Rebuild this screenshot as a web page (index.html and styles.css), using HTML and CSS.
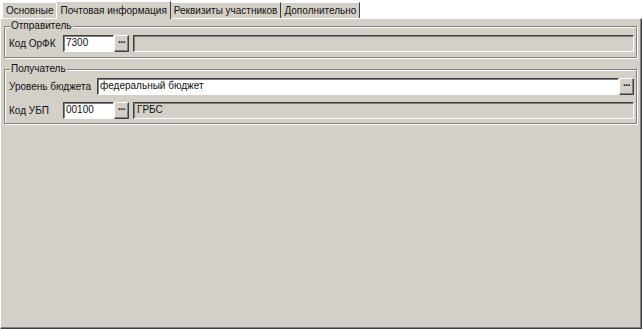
FILE: index.html
```html
<!DOCTYPE html>
<html>
	<head>
		<meta charset="UTF-8">
		<title>Почтовая информация</title>
		<link rel="stylesheet" href="styles.css">
	</head>
	<body>
		<div class="tabs">
			<div class="tab">Основные</div>
			<div class="tab active">Почтовая информация</div>
			<div class="tab">Реквизиты участников</div>
			<div class="tab">Дополнительно</div>
		</div>
		<div class="page">
			<div class="group">
				<div class="legend">Отправитель</div>
				<div class="row">
					<span class="lbl w1">Код ОрФК</span>
					<div class="edit short">7300</div>
					<div class="dots">···</div>
					<div class="field"></div>
				</div>
			</div>
			<div class="group g2">
				<div class="legend">Получатель</div>
				<div class="row">
					<span class="lbl w2">Уровень бюджета</span>
					<div class="edit long">федеральный бюджет</div>
					<div class="dots">···</div>
				</div>
				<div class="row r2">
					<span class="lbl w1">Код УБП</span>
					<div class="edit short">00100</div>
					<div class="dots">···</div>
					<div class="field">ГРБС</div>
				</div>
			</div>
		</div>
	</body>
</html>
```

FILE: styles.css
```css
*{
	margin: 0;
	padding: 0;
	box-sizing: border-box;
}
body{
	width: 642px;
	height: 329px;
	background: #fff;
	font: 10px "Liberation Sans", Arial, sans-serif;
	color: #111;
	overflow: hidden;
}
.tabs{
	display: flex;
	height: 18px;
	padding-left: 2px;
	background: #fff;
	align-items: flex-end;
}
.tab{
	height: 16px;
	line-height: 15px;
	padding: 0 3px;
	background: #d4d0c8;
	border-right: 1px solid #404040;
	border-top: 1px solid #fff;
}
.tab:first-child{border-right: none; border-left: 1px solid #fff;}
.tab.active{
	height: 18px;
	line-height: 17px;
	padding: 0 3px;
	border-left: 1px solid #fff;
	border-right: 1px solid #404040;
	margin-bottom: -1px;
	position: relative;
	z-index: 1;
}
.page{
	height: 311px;
	background: #d4d0c8;
	border-top: 1px solid #fff;
	border-left: 1px solid #fff;
	border-right: 1px solid #404040;
	border-bottom: 1px solid #404040;
	box-shadow: inset -1px -1px 0 #808080;
	padding: 7px 4px 0 3px;
}
.group{
	position: relative;
	height: 32px;
	border: 1px solid #808080;
	box-shadow: 1px 1px 0 #fff, inset 1px 1px 0 #fff;
	padding: 8px 2px 0 4px;
}
.g2{
	margin-top: 11px;
	height: 55px;
}
.legend{
	position: absolute;
	top: -7px;
	left: 5px;
	padding: 0 1px;
	background: #d4d0c8;
	line-height: 12px;
}
.row{
	display: flex;
	align-items: center;
	height: 17px;
}
.r2{margin-top: 7px;}
.lbl{white-space: nowrap;}
.w1{width: 54px;}
.w2{width: 88px;}
.edit{
	height: 17px;
	background: #fff;
	border-top: 1px solid #404040;
	border-left: 1px solid #404040;
	border-right: 1px solid #fff;
	border-bottom: 1px solid #fff;
	box-shadow: inset 1px 1px 0 #808080;
	padding: 0 2px;
	line-height: 14px;
}
.short{width: 51px;}
.long{flex: 1;}
.dots{
	width: 15px;
	height: 17px;
	background: #d4d0c8;
	border-top: 1px solid #fff;
	border-left: 1px solid #fff;
	border-right: 1px solid #404040;
	border-bottom: 1px solid #404040;
	box-shadow: inset -1px -1px 0 #808080;
	font-weight: bold;
	font-size: 10px;
	line-height: 13px;
	text-align: center;
	letter-spacing: -1px;
}
.field{
	flex: 1;
	height: 17px;
	margin-left: 4px;
	border-top: 1px solid #404040;
	border-left: 1px solid #404040;
	border-right: 1px solid #fff;
	border-bottom: 1px solid #fff;
	box-shadow: inset 1px 1px 0 #808080;
	padding: 0 3px;
	line-height: 14px;
}
```
